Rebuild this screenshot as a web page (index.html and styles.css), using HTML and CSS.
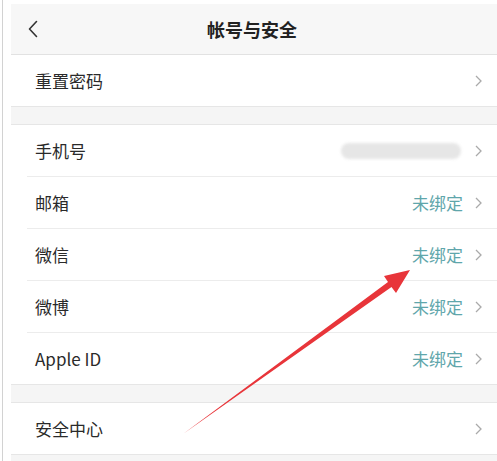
FILE: index.html
```html
<!DOCTYPE html>
<html lang="zh-CN">
<head>
    <meta charset="UTF-8">
    <meta name="viewport" content="width=device-width, initial-scale=1.0">
    <title>帐号与安全</title>
    <link rel="stylesheet" href="styles.css">
</head>
<body>
    <div class="page">
        <div class="screen">
            <div class="nav">
                <svg class="back" width="10" height="18" viewBox="0 0 10 18">
                    <path d="M8.5 1.5 L1.5 9 L8.5 16.5" fill="none" stroke="#333" stroke-width="1.6" stroke-linecap="round" stroke-linejoin="round"/>
                </svg>
                <h1 class="title">帐号与安全</h1>
            </div>

            <div class="group">
                <div class="row">
                    <span class="label">重置密码</span>
                    <svg class="arrow" width="7" height="12" viewBox="0 0 7 12"><path d="M1 1 L6 6 L1 11" fill="none" stroke="#aaa" stroke-width="1.3"/></svg>
                </div>
            </div>

            <div class="group">
                <div class="row">
                    <span class="label">手机号</span>
                    <span class="phone"></span>
                    <svg class="arrow" width="7" height="12" viewBox="0 0 7 12"><path d="M1 1 L6 6 L1 11" fill="none" stroke="#aaa" stroke-width="1.3"/></svg>
                </div>
                <div class="row">
                    <span class="label">邮箱</span>
                    <span class="status">未绑定</span>
                    <svg class="arrow" width="7" height="12" viewBox="0 0 7 12"><path d="M1 1 L6 6 L1 11" fill="none" stroke="#aaa" stroke-width="1.3"/></svg>
                </div>
                <div class="row">
                    <span class="label">微信</span>
                    <span class="status">未绑定</span>
                    <svg class="arrow" width="7" height="12" viewBox="0 0 7 12"><path d="M1 1 L6 6 L1 11" fill="none" stroke="#aaa" stroke-width="1.3"/></svg>
                </div>
                <div class="row">
                    <span class="label">微博</span>
                    <span class="status">未绑定</span>
                    <svg class="arrow" width="7" height="12" viewBox="0 0 7 12"><path d="M1 1 L6 6 L1 11" fill="none" stroke="#aaa" stroke-width="1.3"/></svg>
                </div>
                <div class="row">
                    <span class="label">Apple ID</span>
                    <span class="status">未绑定</span>
                    <svg class="arrow" width="7" height="12" viewBox="0 0 7 12"><path d="M1 1 L6 6 L1 11" fill="none" stroke="#aaa" stroke-width="1.3"/></svg>
                </div>
            </div>

            <div class="group">
                <div class="row">
                    <span class="label">安全中心</span>
                    <svg class="arrow" width="7" height="12" viewBox="0 0 7 12"><path d="M1 1 L6 6 L1 11" fill="none" stroke="#aaa" stroke-width="1.3"/></svg>
                </div>
            </div>
        </div>
    </div>

    <!-- red pointer drawn over the list -->
    <svg class="pointer" width="497" height="461" viewBox="0 0 497 461">
        <polygon points="183,434 388,282 384,276 410,270 396,293 391.5,287" fill="#e8353a"/>
    </svg>
</body>
</html>
```

FILE: styles.css
```css
body {
    margin: 0;
    width: 497px;
    height: 461px;
    overflow: hidden;
    background: #fff;
    font-family: "Noto Sans CJK SC", "Noto Sans", sans-serif;
    position: relative;
}
.page {
    margin-left: 2px;
    border-left: 1px solid #d2d2d2;
    padding-left: 8px;
    padding-top: 4px;
    height: 457px;
}
.screen {
    background: #f5f5f5;
    height: 100%;
}
.nav {
    height: 50px;
    background: #f7f7f7;
    border-bottom: 1px solid #e2e2e2;
    display: flex;
    align-items: center;
    justify-content: center;
    position: relative;
}
.back {
    position: absolute;
    left: 17px;
    top: 16px;
}
.title {
    margin: 0;
    font-size: 18px;
    font-weight: bold;
    color: #222;
    margin-left: -4px;
}
.group {
    background: #fff;
    border-top: 1px solid #e6e6e6;
    border-bottom: 1px solid #e6e6e6;
    margin-bottom: 17px;
}
.nav + .group {
    border-top: none;
}
.row {
    height: 51px;
    margin-left: 16px;
    padding-left: 8px;
    padding-right: 15px;
    display: flex;
    align-items: center;
    border-top: 1px solid #ececec;
}
.row:first-child {
    border-top: none;
}
.label {
    flex: 1;
    font-size: 17px;
    color: #2a2a2a;
}
.status {
    font-size: 17px;
    color: #5fa6ab;
    margin-right: 12px;
}
.phone {
    width: 120px;
    height: 16px;
    border-radius: 8px;
    background: #e6e6e6;
    filter: blur(1.5px);
    margin-right: 14px;
}
.arrow {
    display: block;
}
.pointer {
    position: absolute;
    left: 0;
    top: 0;
}
```
